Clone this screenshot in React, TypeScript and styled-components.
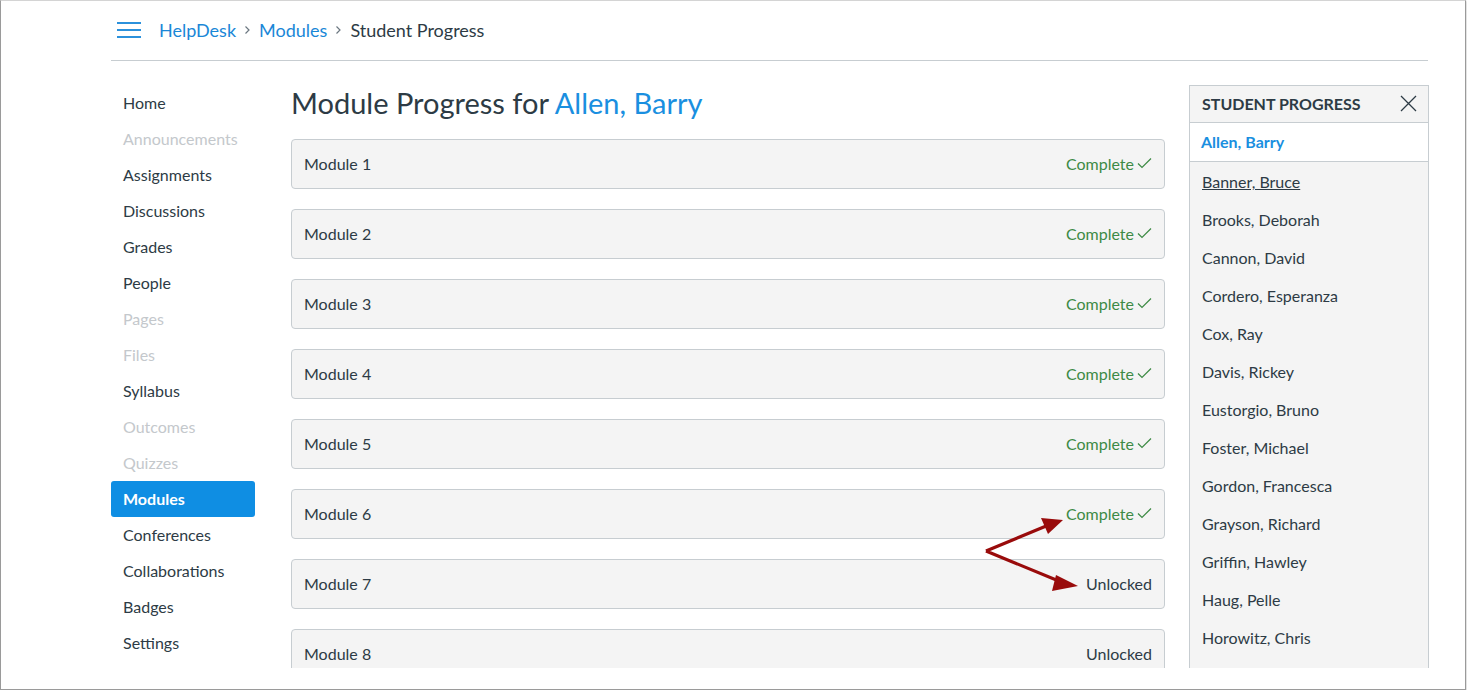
import React from 'react';
import styled, {createGlobalStyle} from 'styled-components';

const GlobalStyle = createGlobalStyle`
	html, body {
		margin: 0;
		padding: 0;
		background: #fff;
	}
	body {
		font-family: Lato, 'Noto Sans', 'Liberation Sans', sans-serif;
		color: #2d3b45;
	}
`;

const Window = styled.div`
	box-sizing: border-box;
	width: 1466px;
	height: 690px;
	border: 1px solid #9a9a9a;
	border-top-color: #d4d4d4;
	box-shadow: 0 1px 2px rgba(0, 0, 0, 0.35);
	background: #fff;
`;

const Viewport = styled.div`
	position: relative;
	height: 667px;
	overflow: hidden;
	padding-left: 110px;
`;

const Header = styled.header`
	width: 1317px;
	height: 60px;
	border-bottom: 1px solid #c7cdd1;
	display: flex;
	align-items: center;
	gap: 18px;
	padding: 0 0 2px 6px;
	box-sizing: border-box;
`;

const Burger = styled.button`
	width: 24px;
	height: 16px;
	padding: 0;
	border: 0;
	background: none;
	display: flex;
	flex-direction: column;
	justify-content: space-between;
	span {
		display: block;
		height: 2px;
		background: #2b91dc;
	}
`;

const Crumbs = styled.nav`
	display: flex;
	align-items: center;
	gap: 8px;
	font-size: 18px;
`;

const Crumb = styled.a<{$current?: boolean}>`
	color: ${({$current}) => ($current ? '#2d3b45' : '#1a87d7')};
	text-decoration: none;
`;

const Body = styled.div`
	display: flex;
	align-items: flex-start;
	padding-top: 24px;
`;

const Nav = styled.ul`
	list-style: none;
	margin: 0;
	padding: 0;
	width: 144px;
	flex: none;
`;

const NavItem = styled.li<{$active?: boolean; $disabled?: boolean}>`
	height: 36px;
	line-height: 36px;
	padding-left: 12px;
	font-size: 16px;
	border-radius: 3px;
	font-weight: ${({$active}) => ($active ? 700 : 400)};
	background: ${({$active}) => ($active ? '#0f8ee3' : 'transparent')};
	color: ${({$active, $disabled}) =>
		$active ? '#fff' : $disabled ? '#c4c8cc' : '#2d3b45'};
`;

const Main = styled.main`
	width: 874px;
	margin-left: 36px;
	flex: none;
`;

const Title = styled.h1`
	margin: 0 0 18px;
	font-size: 29px;
	font-weight: 400;
	line-height: 36px;
	color: #2d3b45;
	span {
		color: #1a8fe0;
	}
`;

const ModuleList = styled.div`
	display: flex;
	flex-direction: column;
	gap: 20px;
`;

const ModuleRow = styled.div`
	box-sizing: border-box;
	height: 50px;
	display: flex;
	align-items: center;
	justify-content: space-between;
	padding: 0 12px 2px 12px;
	background: #f4f4f4;
	border: 1px solid #c7cdd1;
	border-radius: 4px;
	font-size: 16px;
`;

const Status = styled.span<{$done?: boolean}>`
	display: flex;
	align-items: center;
	gap: 3px;
	color: ${({$done}) => ($done ? '#3d8a44' : '#2d3b45')};
`;

const Side = styled.aside`
	width: 240px;
	margin-left: 24px;
	flex: none;
	box-sizing: border-box;
	border: 1px solid #c7cdd1;
	background: #f4f4f4;
	height: 620px;
`;

const SideHead = styled.div`
	box-sizing: border-box;
	height: 37px;
	display: flex;
	align-items: center;
	justify-content: space-between;
	padding: 0 11px 2px 12px;
	border-bottom: 1px solid #c7cdd1;
	font-size: 16px;
	font-weight: 700;
	color: #2d3b45;
`;

const Current = styled.div`
	height: 38px;
	line-height: 38px;
	padding-left: 11px;
	background: #fff;
	border-bottom: 1px solid #c7cdd1;
	font-size: 16px;
	font-weight: 700;
	color: #1a8fe0;
`;

const Students = styled.ul`
	list-style: none;
	margin: 0;
	padding: 1px 0 0;
`;

const Student = styled.li<{$underline?: boolean}>`
	height: 38px;
	line-height: 38px;
	padding-left: 12px;
	font-size: 16px;
	color: #2d3b45;
	text-decoration: ${({$underline}) => ($underline ? 'underline' : 'none')};
`;

const Arrows = styled.svg`
	position: absolute;
	left: 975px;
	top: 510px;
	pointer-events: none;
`;

const Chevron = () => (
	<svg width="7" height="10" viewBox="0 0 7 10">
		<path d="M1.5 1.5 L5 5 L1.5 8.5" fill="none" stroke="#6b7780" strokeWidth="1.2" />
	</svg>
);

const Check = () => (
	<svg width="15" height="12" viewBox="0 0 15 12">
		<path d="M1 6.5 L5 10.5 L14 1.5" fill="none" stroke="#3d8a44" strokeWidth="1.2" />
	</svg>
);

const CloseIcon = () => (
	<svg width="17" height="17" viewBox="0 0 17 17">
		<path d="M1 1 L16 16 M16 1 L1 16" stroke="#2d3b45" strokeWidth="1.3" />
	</svg>
);

const navItems: {label: string; disabled?: boolean; active?: boolean}[] = [
	{label: 'Home'},
	{label: 'Announcements', disabled: true},
	{label: 'Assignments'},
	{label: 'Discussions'},
	{label: 'Grades'},
	{label: 'People'},
	{label: 'Pages', disabled: true},
	{label: 'Files', disabled: true},
	{label: 'Syllabus'},
	{label: 'Outcomes', disabled: true},
	{label: 'Quizzes', disabled: true},
	{label: 'Modules', active: true},
	{label: 'Conferences'},
	{label: 'Collaborations'},
	{label: 'Badges'},
	{label: 'Settings'},
];

const modules = [1, 2, 3, 4, 5, 6, 7, 8].map((n) => ({
	name: `Module ${n}`,
	done: n <= 6,
}));

const students = [
	'Banner, Bruce',
	'Brooks, Deborah',
	'Cannon, David',
	'Cordero, Esperanza',
	'Cox, Ray',
	'Davis, Rickey',
	'Eustorgio, Bruno',
	'Foster, Michael',
	'Gordon, Francesca',
	'Grayson, Richard',
	'Griffin, Hawley',
	'Haug, Pelle',
	'Horowitz, Chris',
];

export default function App() {
	return (
		<>
			<GlobalStyle />
			<Window>
				<Viewport>
					<Header>
						<Burger aria-label="Menu">
							<span />
							<span />
							<span />
						</Burger>
						<Crumbs>
							<Crumb href="#">HelpDesk</Crumb>
							<Chevron />
							<Crumb href="#">Modules</Crumb>
							<Chevron />
							<Crumb $current>Student Progress</Crumb>
						</Crumbs>
					</Header>
					<Body>
						<Nav>
							{navItems.map((item) => (
								<NavItem key={item.label} $active={item.active} $disabled={item.disabled}>
									{item.label}
								</NavItem>
							))}
						</Nav>
						<Main>
							<Title>
								Module Progress for <span>Allen, Barry</span>
							</Title>
							<ModuleList>
								{modules.map((m) => (
									<ModuleRow key={m.name}>
										{m.name}
										{m.done ? (
											<Status $done>
												Complete
												<Check />
											</Status>
										) : (
											<Status>Unlocked</Status>
										)}
									</ModuleRow>
								))}
							</ModuleList>
						</Main>
						<Side>
							<SideHead>
								STUDENT PROGRESS
								<CloseIcon />
							</SideHead>
							<Current>Allen, Barry</Current>
							<Students>
								{students.map((s, i) => (
									<Student key={s} $underline={i === 0}>
										{s}
									</Student>
								))}
							</Students>
						</Side>
					</Body>
					<Arrows width="110" height="85" viewBox="0 0 110 85">
						<path d="M10 40 L75 13 M10 40 L90 73" stroke="#990b0b" strokeWidth="3.2" fill="none" />
						<path d="M87 9 L65 7 L72 23 Z" fill="#990b0b" />
						<path d="M102 75 L80 64 L76 80 Z" fill="#990b0b" />
					</Arrows>
				</Viewport>
			</Window>
		</>
	);
}
